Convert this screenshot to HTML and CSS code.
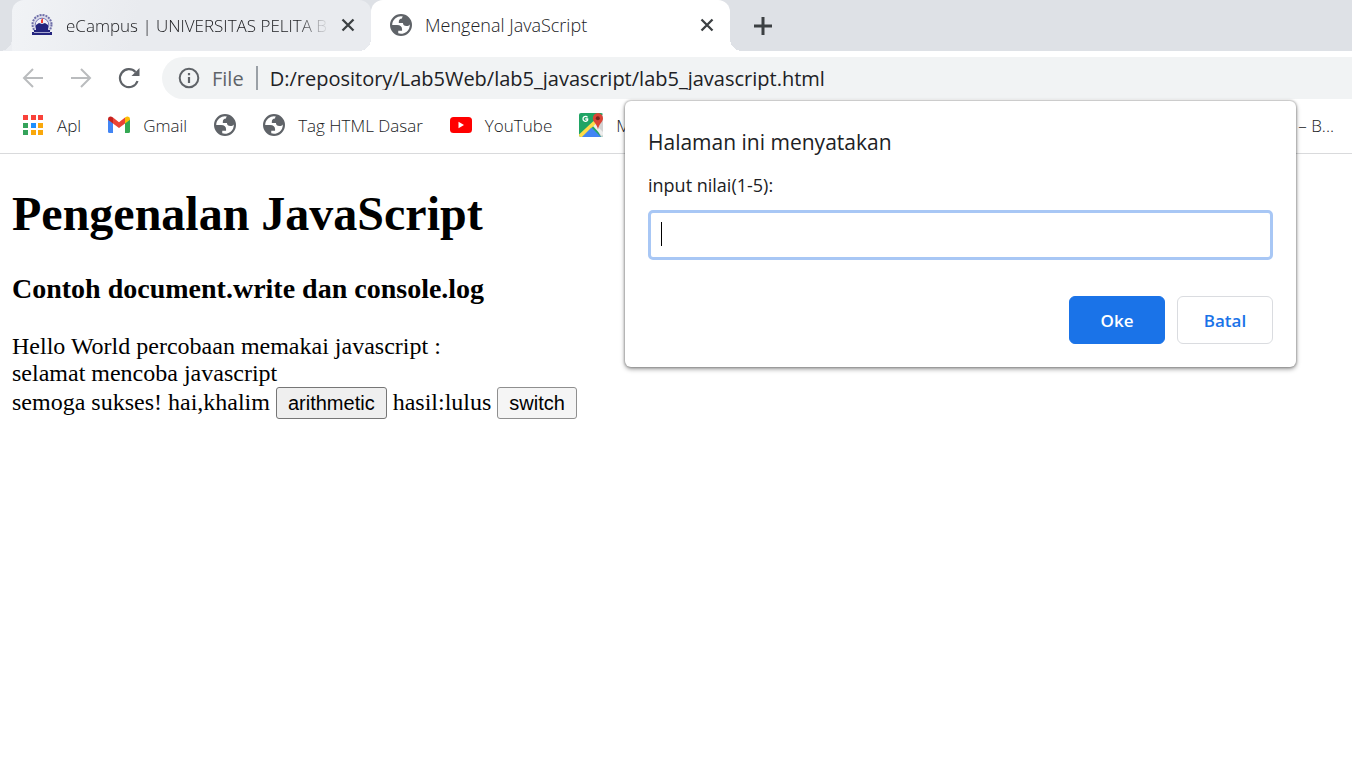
FILE: index.html
```html
<!DOCTYPE html>
<html lang="id">
<head>
<meta charset="utf-8">
<title>Mengenal JavaScript</title>
<link rel="stylesheet" href="styles.css">
</head>
<body>
<svg class="defs" width="0" height="0" aria-hidden="true">
  <symbol id="globe" viewBox="2 2 20 20">
    <path fill-rule="evenodd" d="M12 2a10 10 0 1 0 0 20a10 10 0 1 0 0-20zM4 12h4.400c3.407.022 4.922 1.730 4.543 5.127H9.488v2.470a8.004 8.004 0 0 0 10.498-8.080C19.327 12.507 18.333 13 17 13c-2.137 0-3.206-.916-3.206-2.750h-3.748c-.274-2.728.683-4.092 2.870-4.092 0-.975.327-1.597.811-1.970A8.004 8.004 0 0 0 4 12z"/>
  </symbol>
  <symbol id="cross" viewBox="0 0 14 14">
    <path d="M1.500 1.500l11 11M12.500 1.500l-11 11" fill="none" stroke="#3c4043" stroke-width="2.300"/>
  </symbol>
</svg>

<header class="browser">
  <nav class="tabstrip" aria-label="Tab">
    <div class="tab tab-idle">
      <svg class="favicon" viewBox="0 0 22 22">
        <circle cx="11" cy="10.500" r="9.500" fill="#dcddeb" stroke="#6d6da8" stroke-width="2" stroke-dasharray="2 1"/>
        <circle cx="11" cy="11" r="6.800" fill="#f1f1f8" stroke="#7777b4"/>
        <path d="M10 9V6l2-2v5z" fill="#ef4035"/>
        <path d="M5 11l3-2 3 1 3-1 3 2v5h2v2h2v3H1v-3h2v-2h2z" fill="#24247e"/>
        <path d="M3 18.500h16" stroke="#a8a8d2"/>
      </svg>
      <span class="tab-title fade">eCampus | UNIVERSITAS PELITA B</span>
      <button class="icon-button" aria-label="Tutup tab eCampus"><svg width="14" height="14"><use href="#cross"/></svg></button>
    </div>
    <div class="tab tab-active">
      <svg class="favicon globe"><use href="#globe"/></svg>
      <span class="tab-title">Mengenal JavaScript</span>
      <button class="icon-button" aria-label="Tutup tab Mengenal JavaScript"><svg width="14" height="14"><use href="#cross"/></svg></button>
    </div>
    <button class="icon-button new-tab" aria-label="Tab baru"><svg width="18" height="18" viewBox="0 0 18 18"><path d="M9 0v18M0 9h18" stroke="#3c4043" stroke-width="3"/></svg></button>
  </nav>

  <div class="toolbar">
    <button class="icon-button nav-button" aria-label="Kembali"><svg width="24" height="24" viewBox="0 0 24 24"><path d="M22 12H3M12 3l-9 9 9 9" fill="none" stroke="#babcbe" stroke-width="2"/></svg></button>
    <button class="icon-button nav-button" aria-label="Maju"><svg width="24" height="24" viewBox="0 0 24 24"><path d="M2 12h19M12 3l9 9-9 9" fill="none" stroke="#babcbe" stroke-width="2"/></svg></button>
    <button class="icon-button nav-button" aria-label="Muat ulang"><svg width="24" height="24" viewBox="0 0 24 24"><path d="M20.500 15A9 9 0 1 1 18.500 6" fill="none" stroke="#5f6368" stroke-width="2.200"/><path d="M22.500 2v8h-8z" fill="#5f6368"/></svg></button>
    <div class="omnibox">
      <svg width="22" height="22" viewBox="0 0 22 22"><circle cx="11" cy="11" r="9.300" fill="none" stroke="#5f6368" stroke-width="2"/><path d="M11 10v6M11 6v2.200" stroke="#5f6368" stroke-width="2.200"/></svg>
      <span class="scheme">File</span>
      <input class="url" type="text" aria-label="Alamat" value="D:/repository/Lab5Web/lab5_javascript/lab5_javascript.html">
    </div>
  </div>

  <nav class="bookmarks" aria-label="Bookmark">
    <a href="#apl" class="bookmark"><svg width="22" height="22" viewBox="0 0 22 22"><path d="M1 1h5v5H1zM9 1h5v5H9zM16 1h5v5h-5z" fill="#f9423a"/><path d="M1 9h5v5H1zM1 16h5v5H1z" fill="#34a35a"/><path d="M9 9h5v5H9z" fill="#1e90ff"/><path d="M16 9h5v5h-5zM9 16h5v5H9zM16 16h5v5h-5z" fill="#f9a80c"/></svg>Apl</a>
    <a href="#gmail" class="bookmark"><svg width="22" height="18" viewBox="0 0 22 18"><path d="M0 3l5 4v10H1.500Q0 17 0 15.500z" fill="#4285f4"/><path d="M22 3l-5 4v10h3.500q1.500 0 1.500-1.500z" fill="#34a853"/><path d="M5 1.500l6 4.700 6-4.700v6L11 12 5 7.500z" fill="#ea4335"/><path d="M0 3Q0 .700 2.200.500 3.500.400 5 1.500v6L0 3.800z" fill="#c5221f"/><path d="M22 3q0-2.300-2.200-2.500Q18.500.400 17 1.500v6l5-3.700z" fill="#fbbc04"/></svg>Gmail</a>
    <a href="#situs" class="bookmark" aria-label="Situs"><svg class="globe" width="22" height="22"><use href="#globe"/></svg></a>
    <a href="#tag" class="bookmark"><svg class="globe" width="22" height="22"><use href="#globe"/></svg>Tag HTML Dasar</a>
    <a href="#youtube" class="bookmark"><svg width="22" height="16" viewBox="0 0 22 16"><rect width="22" height="16" rx="3.500" fill="#f00"/><path d="M8.500 4.700v6.600L14 8z" fill="#fff"/></svg>YouTube</a>
    <a href="#maps" class="bookmark"><svg width="24" height="24" viewBox="0 0 24 24"><rect width="24" height="24" rx="2" fill="#20a464"/><path d="M14.500 9L24 1v21q0 2-2 2z" fill="#d3d3d3"/><path d="M13 12l2-2 9 9v3l-1 1z" fill="#eee"/><path d="M0 21.500L14.500 8l2.500 2.500L3.500 24H2q-2 0-2-2z" fill="#ffdc48"/><path d="M3 24l9.500-9.500L22 24z" fill="#4285f4"/><path d="M8.500 4.300A2.500 2.500 0 1 0 8.600 7.200V6H6.300" fill="none" stroke="#fff" stroke-width="1.300"/><path d="M19 0a5.300 5.300 0 0 1 5 5.300c0 4-4 5.200-5 11.200-1-6-5.200-7.200-5.200-11.200A5.300 5.300 0 0 1 19 0z" fill="#db4437"/><circle cx="18.800" cy="5.300" r="2" fill="#7b231e"/></svg>M</a>
    <a href="#lain" class="bookmark bookmark-last">– B...</a>
  </nav>

  <form class="dialog" role="dialog" aria-labelledby="dialog-title">
    <h2 class="dialog-title" id="dialog-title">Halaman ini menyatakan</h2>
    <label class="dialog-message" for="nilai">input nilai(1-5):</label>
    <div class="dialog-field"><input class="dialog-input" id="nilai" type="text"></div>
    <div class="dialog-actions">
      <button class="dialog-button primary" type="button">Oke</button>
      <button class="dialog-button" type="button">Batal</button>
    </div>
  </form>
</header>

<main class="page">
  <h1>Pengenalan JavaScript</h1>
  <h3>Contoh document.write dan console.log</h3>
  Hello World percobaan memakai javascript :<br>
  selamat mencoba javascript<br>
  semoga sukses! hai,khalim
  <button class="page-button">arithmetic</button>
  hasil:lulus
  <button class="page-button light">switch</button>
</main>
</body>
</html>
```
FILE: styles.css
```css
* { box-sizing: border-box; }

body {
  margin: 0;
  background: #fff;
}

.defs { position: absolute; }

svg { flex: none; display: block; }

.browser {
  position: relative;
  font-family: "Open Sans", "Noto Sans", sans-serif;
  font-size: 17px;
  color: #202124;
}

.icon-button {
  display: flex;
  align-items: center;
  justify-content: center;
  flex: none;
  padding: 0;
  border: 0;
  background: none;
}

.globe { fill: #5f6368; }

.tabstrip {
  display: flex;
  height: 51px;
  padding-left: 12px;
  background: #dee1e6;
}

.tab {
  position: relative;
  display: flex;
  align-items: center;
  flex: 0 1 359px;
  min-width: 0;
  padding: 0 16px 1px 19px;
  border-radius: 12px 12px 0 0;
}

.tab-idle {
  background: linear-gradient(100deg, #f1f3f6, #e9ebef 35%);
  border-radius: 12px 12px 12px 0;
}

.tab-active {
  background: #fff;
  font-size: 18px;
}

/* Curved feet where the selected tab meets the toolbar. */
.tab-idle::before,
.tab-active::before,
.tab-active::after {
  content: "";
  position: absolute;
  bottom: 0;
  width: 12px;
  height: 12px;
}

.tab-idle::before {
  right: 100%;
  background: radial-gradient(circle at 0 0, transparent 12px, #eceef2 12px);
}

.tab-active::before {
  right: 100%;
  background: radial-gradient(circle at 0 0, transparent 12px, #fff 12px);
}

.tab-active::after {
  left: 100%;
  background: radial-gradient(circle at 100% 0, transparent 12px, #fff 12px);
}

.favicon {
  width: 22px;
  height: 22px;
}

.tab-title {
  flex: 1;
  min-width: 0;
  margin: 0 12px 0 13px;
  overflow: hidden;
  white-space: nowrap;
  font-weight: 300;
}

.fade {
  mask-image: linear-gradient(90deg, #000 88%, transparent);
}

.new-tab { width: 66px; }

.toolbar {
  display: flex;
  align-items: center;
  padding: 6px 0 0 9px;
}

.nav-button {
  width: 48px;
  height: 42px;
}

.omnibox {
  display: flex;
  align-items: center;
  flex: 1;
  height: 42px;
  margin-left: 9px;
  padding-left: 16px;
  border-radius: 21px 0 0 21px;
  background: #f1f3f4;
  font-size: 20px;
}

.scheme {
  margin: 0 12px;
  color: #5f6368;
}

.url {
  flex: 1;
  min-width: 0;
  height: 24px;
  padding: 0 0 0 12px;
  border: 0;
  border-left: 2px solid #9aa0a6;
  background: none;
  color: #202124;
  font: inherit;
}

.bookmarks {
  display: flex;
  align-items: center;
  gap: 27px;
  height: 55px;
  padding: 0 18px 2px 22px;
  border-bottom: 1px solid #d9dadc;
  overflow: hidden;
}

.bookmark {
  display: flex;
  align-items: center;
  gap: 13px;
  flex: none;
  color: inherit;
  font-weight: 300;
  text-decoration: none;
}

.bookmark-last { margin-left: auto; }

.dialog {
  position: absolute;
  top: 101px;
  right: 56px;
  width: 671px;
  max-width: 100%;
  padding: 24px 23px 23px;
  border-radius: 6px;
  background: #fff;
  box-shadow: 0 0 2px 1px rgba(0, 0, 0, 0.2), 0 2px 5px rgba(0, 0, 0, 0.4);
  color: #202124;
}

.dialog-title {
  margin: 0 0 14px;
  font-size: 21px;
  font-weight: 400;
  line-height: 34px;
}

.dialog-message {
  display: block;
  margin-bottom: 13px;
  font-size: 18px;
  line-height: 24px;
}

.dialog-field { position: relative; }

.dialog-input {
  display: block;
  width: 100%;
  height: 50px;
  padding: 0 12px;
  border: 3px solid #a8c7f5;
  border-radius: 5px;
  outline: 0;
  background: #fff;
  font: inherit;
}

/* Text cursor shown in the focused field. */
.dialog-field::after {
  content: "";
  position: absolute;
  left: 13px;
  top: 12px;
  width: 1px;
  height: 24px;
  background: #000;
}

.dialog-actions {
  display: flex;
  justify-content: flex-end;
  gap: 12px;
  margin-top: 36px;
}

.dialog-button {
  width: 96px;
  height: 48px;
  border: 1px solid #dadce0;
  border-radius: 6px;
  background: #fff;
  color: #1a73e8;
  font-family: inherit;
  font-size: 17px;
  font-weight: 600;
}

.primary {
  border-color: #1a73e8;
  background: #1a73e8;
  color: #fff;
}

.page {
  padding: 0 12px;
  font-family: "Liberation Serif", "Times New Roman", serif;
  font-size: 24px;
  line-height: 27px;
  color: #000;
  display: flow-root;
}

.page h1 {
  margin: 32px 0;
  font-size: 48px;
  line-height: 55px;
}

.page h3 {
  margin: 28px 0;
  font-size: 28px;
  line-height: 32px;
}

.page-button {
  height: 32px;
  padding: 0 11px;
  border: 1px solid #767676;
  border-radius: 3px;
  background: #efefef;
  color: #000;
  font-family: "Liberation Sans", Arial, sans-serif;
  font-size: 20px;
}

.light {
  border-color: #8f8f8f;
  background: #f5f5f5;
}
```
